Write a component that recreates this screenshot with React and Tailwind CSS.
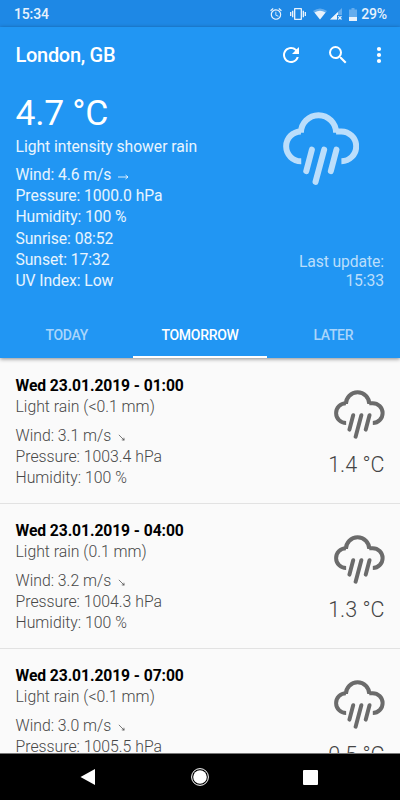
import React from "react";

function RainIcon({ className }) {
  return (
    <svg viewBox="39 36 229 219" className={className} fill="none" stroke="currentColor" strokeWidth="18">
      <path d="M94 184A45 45 0 0 1 93 94V98A53 53 0 0 1 199 98V94H214A45 45 0 0 1 215 184" />
      <path strokeLinecap="round" d="M126 149L109 214M163 149L137 246M200 149L183 214" />
    </svg>
  );
}

function WindArrow({ rotate, className }) {
  return (
    <svg viewBox="0 0 12 12" className={className} fill="none" stroke="currentColor" strokeWidth="0.9">
      <path transform={`rotate(${rotate} 6 6)`} d="M1 6H11M8.500 4L11 6L8.500 8" />
    </svg>
  );
}

function StatusBar() {
  return (
    <div className="flex h-[27px] shrink-0 items-center bg-[#1e88e5] pr-[13px] pl-[14px] pt-px text-[14px] font-medium tracking-[-0.15px] text-[#e8f2fc]">
      <span className="leading-4">15:34</span>
      <svg className="ml-auto h-[14px] w-[14px]" viewBox="0 0 24 24" fill="currentColor">
        <path d="M22 5.72l-4.6-3.86-1.29 1.53 4.6 3.86L22 5.72zM7.88 3.39L6.6 1.86 2 5.71l1.29 1.53 4.59-3.85zM12.5 8H11v6l4.75 2.85.75-1.23-4-2.37V8zM12 4c-4.97 0-9 4.03-9 9s4.02 9 9 9a9 9 0 1 0 0-18zm0 16c-3.87 0-7-3.13-7-7s3.13-7 7-7 7 3.13 7 7-3.13 7-7 7z" />
      </svg>
      <svg className="ml-[7px] h-4 w-4" viewBox="0 0 24 24" fill="currentColor">
        <path d="M0 15h2V9H0v6zm3 2h2V7H3v10zm19-8v6h2V9h-2zm-3 8h2V7h-2v10zM16.500 3h-9C6.670 3 6 3.670 6 4.500v15c0 .83.67 1.500 1.500 1.500h9c.83 0 1.500-.67 1.500-1.500v-15c0-.83-.67-1.500-1.500-1.500zM16 19H8V5h8v14z" />
      </svg>
      <svg className="ml-[7px] h-3 w-[14px]" viewBox="0 0 14 12" fill="currentColor">
        <path opacity=".35" d="M0 3Q7-2 14 3L7 11.500Z" />
        <path d="M1.500 4.500Q7 1 12.500 4.500L7 11.500Z" />
      </svg>
      <svg className="ml-[3px] h-3 w-3" viewBox="0 0 12 12" fill="currentColor">
        <path opacity=".35" d="M12 0V7H7V11.500H0Z" />
        <path d="M8 4V7H7V11.500H0Z" />
        <path d="M8.300 8.200L11.500 11.500M11.500 8.200L8.300 11.500" stroke="currentColor" strokeWidth="1.200" />
      </svg>
      <svg className="ml-[7px] h-[13px] w-2" viewBox="0 0 8 13" fill="currentColor">
        <path opacity=".35" d="M0 1.500H2.500V0H5.500V1.500H8V9H0Z" />
        <path d="M0 9H8V13H0Z" />
      </svg>
      <span className="ml-1 leading-4">29%</span>
    </div>
  );
}

function Toolbar() {
  return (
    <div className="flex h-14 items-center pl-[15.5px] pr-[9.5px]">
      <h1 className="text-[20px] leading-6 font-medium tracking-[-0.3px]">London, GB</h1>
      <svg className="ml-auto h-6 w-6" viewBox="0 0 24 24" fill="currentColor">
        <path d="M17.65 6.35A7.958 7.958 0 0 0 12 4c-4.42 0-7.99 3.58-7.99 8s3.57 8 7.99 8c3.73 0 6.84-2.55 7.73-6h-2.08A5.99 5.99 0 0 1 12 18c-3.310 0-6-2.690-6-6s2.690-6 6-6c1.660 0 3.140.69 4.220 1.780L13 11h7V4l-2.350 2.350z" />
      </svg>
      <svg className="ml-[22.5px] h-6 w-6" viewBox="0 0 24 24" fill="currentColor">
        <path d="M15.500 14h-.79l-.28-.27A6.471 6.471 0 0 0 16 9.500 6.500 6.500 0 1 0 9.500 16c1.610 0 3.090-.59 4.230-1.570l.27.28v.79l5 4.990L20.490 19l-4.990-5zm-6 0C7.010 14 5 11.990 5 9.500S7.010 5 9.500 5 14 7.010 14 9.500 11.990 14 9.500 14z" />
      </svg>
      <svg className="ml-[17px] h-6 w-6" viewBox="0 0 24 24" fill="currentColor">
        <circle cx="12" cy="6" r="2.100" />
        <circle cx="12" cy="12" r="2.100" />
        <circle cx="12" cy="18" r="2.100" />
      </svg>
    </div>
  );
}

function CurrentWeather() {
  return (
    <div className="flex h-[229px] justify-between pr-4 pl-[15.5px] pt-[9px]">
      <div className="text-[15.7px] leading-[21.1px] tracking-[-0.08px] text-white/90">
        <p className="text-[35.5px] leading-[42px] tracking-[-0.3px] text-white">4.7 °C</p>
        <p className="mt-[1.5px] tracking-[-0.04px]">Light intensity shower rain</p>
        <p className="mt-[7.7px] flex items-center">
          Wind: 4.6 m/s
          <WindArrow rotate={0} className="ml-[6px] mt-[5px] h-3 w-3" />
        </p>
        <p>Pressure: 1000.0 hPa</p>
        <p>Humidity: 100 %</p>
        <p>Sunrise: 08:52</p>
        <p>Sunset: 17:32</p>
        <p>UV Index: Low</p>
      </div>
      <div className="flex flex-col items-end text-[#bbdefb]">
        <RainIcon className="mt-5 mr-[25px] h-[73px] w-[76px]" />
        <p className="mt-[67px] text-right text-[15.7px] leading-[19px] tracking-[-0.09px]">
          Last update:
          <br />
          15:33
        </p>
      </div>
    </div>
  );
}

function Tabs() {
  return (
    <div className="flex h-[46px] text-[14px] font-medium tracking-[-0.3px] text-[#a9d5fb]">
      <div className="flex flex-1 items-center justify-center pt-px">TODAY</div>
      <div className="flex flex-1 items-center justify-center border-b-2 border-white pt-[3px] text-white">TOMORROW</div>
      <div className="flex flex-1 items-center justify-center pt-px">LATER</div>
    </div>
  );
}

const forecast = [
  { time: "01:00", rain: "<0.1", wind: "3.1", pressure: "1003.4", temp: "1.4" },
  { time: "04:00", rain: "0.1", wind: "3.2", pressure: "1004.3", temp: "1.3" },
  { time: "07:00", rain: "<0.1", wind: "3.0", pressure: "1005.5", temp: "0.5" },
];

function ForecastRow({ item }) {
  return (
    <div className="flex h-[145px] shrink-0 justify-between border-b border-[#e2e2e2] pr-[15.5px] pl-[15.5px] pt-4 text-[#484848]">
      <div className="text-[15.8px] leading-[21.1px] font-light">
        <p className="text-[15.7px] font-bold tracking-[-0.09px] text-black">Wed 23.01.2019 - {item.time}</p>
        <p>Light rain ({item.rain} mm)</p>
        <p className="mt-2 flex items-center">
          Wind: {item.wind} m/s
          <WindArrow rotate={45} className="ml-[6px] mt-[4px] h-[9px] w-[9px]" />
        </p>
        <p>Pressure: {item.pressure} hPa</p>
        <p>Humidity: 100 %</p>
      </div>
      <div className="flex flex-col items-end">
        <RainIcon className="mt-[15px] h-[49px] w-[50.5px] text-[#6b6b6b]" />
        <p className="mt-[13px] text-[21.5px] leading-[26px] font-light text-[#444]">{item.temp} °C</p>
      </div>
    </div>
  );
}

export default function App() {
  return (
    <div className="flex h-[800px] w-[400px] flex-col overflow-hidden bg-[#fafafa] font-['Roboto','Liberation_Sans',sans-serif]">
      <StatusBar />
      <header className="z-10 shrink-0 bg-[#2196f3] text-white shadow-[0_1px_4px_rgba(0,0,0,0.45)]">
        <Toolbar />
        <CurrentWeather />
        <Tabs />
      </header>
      <main className="flex min-h-0 flex-1 flex-col overflow-hidden pt-px">
        {forecast.map((item) => (
          <ForecastRow key={item.time} item={item} />
        ))}
      </main>
      <nav className="flex h-[47px] shrink-0 items-center justify-between border-t border-[#777] bg-black pr-[82px] pl-[80px] text-white">
        <svg className="h-4 w-[15px]" viewBox="0 0 15 16" fill="currentColor">
          <path d="M15 0V16L0.500 8Z" />
        </svg>
        <svg className="ml-px h-[18px] w-[18px]" viewBox="0 0 18 18" fill="currentColor">
          <circle cx="9" cy="9" r="6.800" />
          <circle cx="9" cy="9" r="8.400" fill="none" stroke="currentColor" strokeWidth="1" />
        </svg>
        <div className="h-[15px] w-[15px] rounded-[1px] bg-white" />
      </nav>
    </div>
  );
}
